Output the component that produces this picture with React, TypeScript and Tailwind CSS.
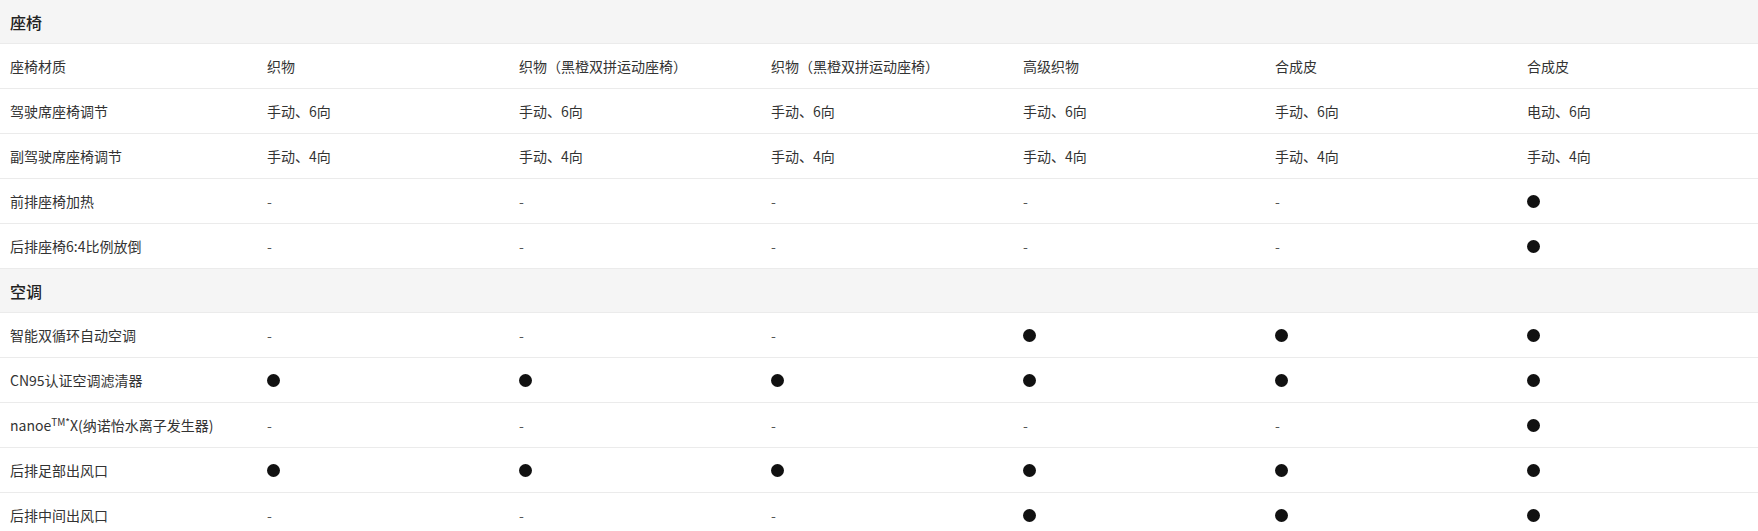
import React from "react";

type Cell = string | boolean;

type Section = {
  title: string;
  rows: { label: React.ReactNode; values: Cell[] }[];
};

const sections: Section[] = [
  {
    title: "座椅",
    rows: [
      {
        label: "座椅材质",
        values: ["织物", "织物（黑橙双拼运动座椅）", "织物（黑橙双拼运动座椅）", "高级织物", "合成皮", "合成皮"],
      },
      { label: "驾驶席座椅调节", values: ["手动、6向", "手动、6向", "手动、6向", "手动、6向", "手动、6向", "电动、6向"] },
      { label: "副驾驶席座椅调节", values: ["手动、4向", "手动、4向", "手动、4向", "手动、4向", "手动、4向", "手动、4向"] },
      { label: "前排座椅加热", values: [false, false, false, false, false, true] },
      { label: "后排座椅6:4比例放倒", values: [false, false, false, false, false, true] },
    ],
  },
  {
    title: "空调",
    rows: [
      { label: "智能双循环自动空调", values: [false, false, false, true, true, true] },
      { label: "CN95认证空调滤清器", values: [true, true, true, true, true, true] },
      {
        label: (
          <>
            nanoe<sup className="text-[10px] leading-none">TM*</sup>X(纳诺怡水离子发生器)
          </>
        ),
        values: [false, false, false, false, false, true],
      },
      { label: "后排足部出风口", values: [true, true, true, true, true, true] },
      { label: "后排中间出风口", values: [false, false, false, true, true, true] },
    ],
  },
];

const ValueCell = ({ value }: { value: Cell }) => {
  if (value === true) {
    return <span className="block h-[13px] w-[13px] rounded-full bg-[#111]" />;
  }
  if (value === false) {
    return <span className="text-[#555]">-</span>;
  }
  return <span>{value}</span>;
};

export default function App() {
  return (
    <div
      className="w-[1758px] h-[531px] overflow-hidden bg-white text-[14px] text-[#333]"
      style={{ fontFamily: '"Noto Sans CJK SC", "Noto Sans", sans-serif' }}
    >
      {sections.map((section) => (
        <div key={section.title}>
          {/* section header */}
          <div className="flex h-[44px] items-center border-b border-[#ebebeb] bg-[#f5f5f5] pl-[10px] text-[16px] font-medium text-[#222]">
            {section.title}
          </div>
          {section.rows.map((row, i) => (
            <div
              key={i}
              className="grid h-[45px] grid-cols-[257px_repeat(6,252px)] items-center border-b border-[#ebebeb]"
            >
              <div className="pl-[10px] whitespace-nowrap">{row.label}</div>
              {row.values.map((v, j) => (
                <div key={j} className="pl-[10px] whitespace-nowrap">
                  <ValueCell value={v} />
                </div>
              ))}
            </div>
          ))}
        </div>
      ))}
    </div>
  );
}
